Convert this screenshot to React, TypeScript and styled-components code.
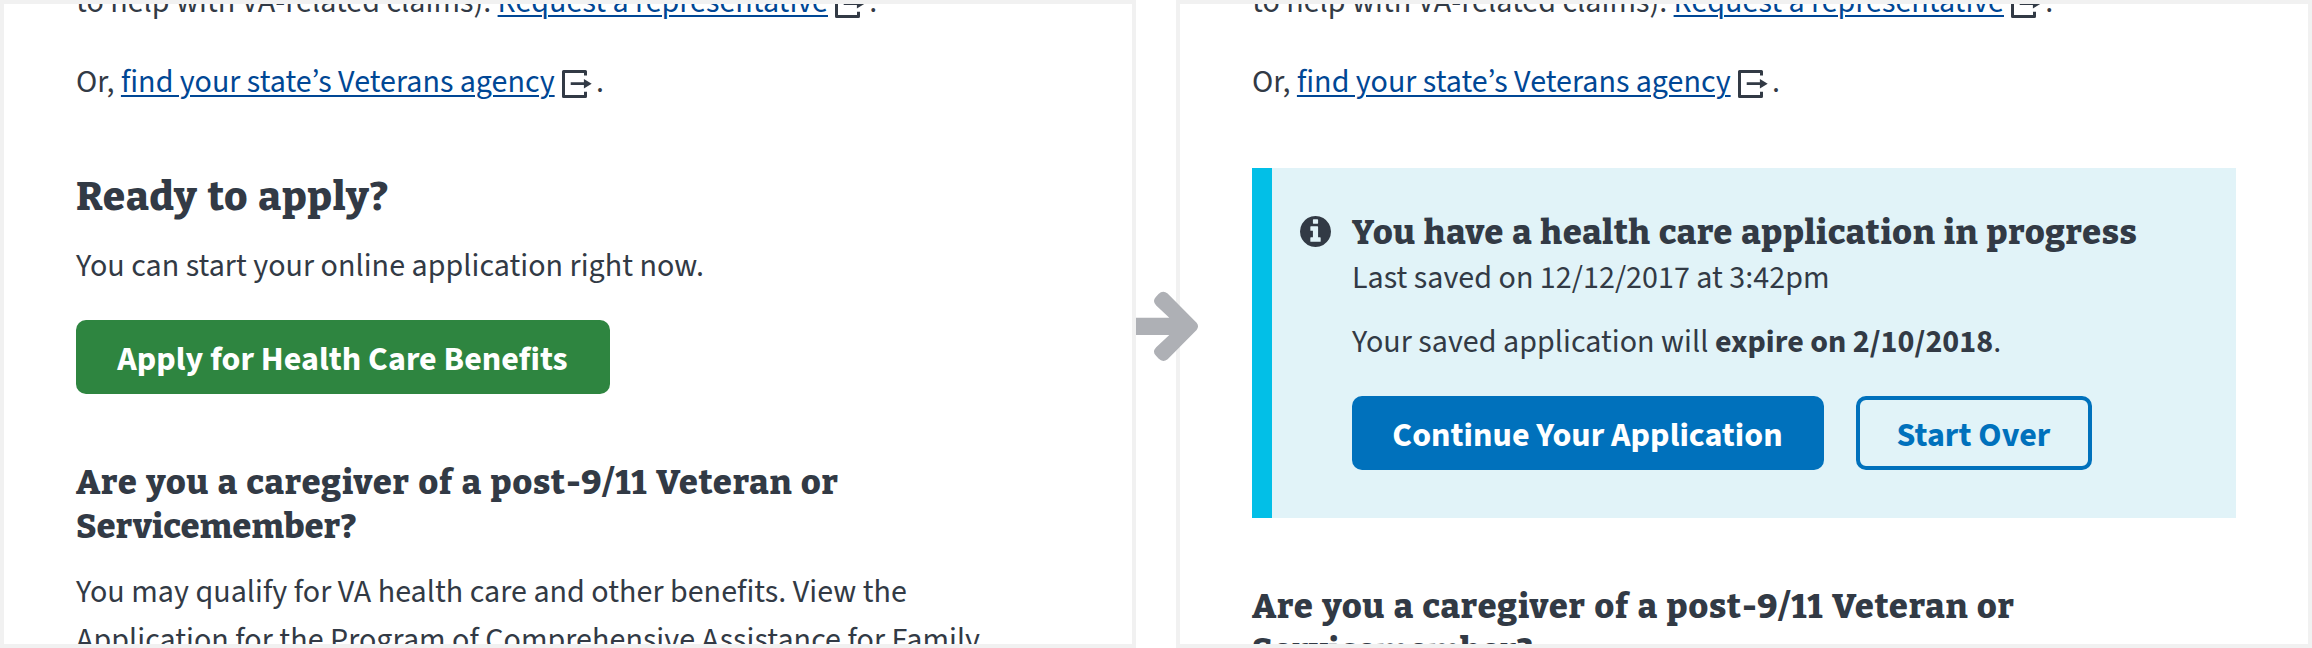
import React from 'react';
import styled, { createGlobalStyle } from 'styled-components';

const GlobalStyle = createGlobalStyle`
  body { margin: 0; background: #fff; }
  *, *::before, *::after { box-sizing: border-box; }
`;

const Comparison = styled.main`
  display: flex;
  gap: 40px;
  position: relative;
  width: 2312px;
  height: 648px;
  overflow: hidden;
  color: #323a45;
  font-family: 'Source Sans 3', 'Source Sans Pro', 'Noto Sans CJK SC', sans-serif;
  font-size: 32px;
  line-height: 48px;
`;

const Panel = styled.section`
  flex: 1;
  height: 648px;
  border: 4px solid #f1f1f1;
  padding: 0 72px;
  overflow: hidden;
`;

const Content = styled.div`
  margin-top: -26px;
  white-space: nowrap;
`;

const Paragraph = styled.p<{ $gap?: number; $spacing?: number }>`
  margin: 0 0 ${(p) => p.$gap ?? 0}px;
  letter-spacing: ${(p) => p.$spacing ?? 0.04}px;
`;

const Link = styled.a`
  color: #004795;
  letter-spacing: 0;
  text-decoration: underline;
  text-decoration-thickness: 2px;
  text-underline-offset: 3px;
`;

const ExitGlyph = styled.svg`
  width: 30px;
  height: 28px;
  margin: 0 4px 0 7.3px;
  vertical-align: -6px;
  overflow: visible;
`;

const Title = styled.h2`
  margin: 65px 0 19px;
  font: 800 40px/52px Bitter, 'Noto Serif', serif;
  letter-spacing: 0.85px;
  word-spacing: 2.4px;
`;

const Subtitle = styled.h3<{ $top?: number; $bottom?: number; $spacing?: number }>`
  margin: ${(p) => p.$top ?? 0}px 0 ${(p) => p.$bottom ?? 0}px;
  font: 800 34px/44px Bitter, 'Noto Serif', serif;
  letter-spacing: ${(p) => p.$spacing ?? 0.95}px;
  word-spacing: 1.8px;
`;

const TightWord = styled.span`
  letter-spacing: 0.3px;
`;

const Button = styled.button<{ $tone: 'green' | 'blue' | 'outline'; $width: number }>`
  display: block;
  width: ${(p) => p.$width}px;
  height: 74px;
  padding: 6px 1px 0 0;
  border: ${(p) => (p.$tone === 'outline' ? '4px solid #0071bc' : '0')};
  border-radius: 10px;
  background: ${(p) => ({ green: '#2e8540', blue: '#0071bc', outline: 'transparent' })[p.$tone]};
  color: ${(p) => (p.$tone === 'outline' ? '#0071bc' : '#fff')};
  font: inherit;
  font-size: 34px;
  font-weight: 700;
  line-height: 44px;
  letter-spacing: 0.04px;
`;

const Alert = styled.div`
  display: flex;
  height: 350px;
  margin-top: 62px;
  padding: 43px 0 48px 28px;
  border-left: 20px solid #02bfe7;
  background: #e1f3f8;
`;

const AlertBody = styled.div`
  margin-left: 21px;
`;

const InfoGlyph = styled.svg`
  flex: none;
  width: 31px;
  height: 31px;
  margin-top: 5px;
`;

const Actions = styled.div`
  display: flex;
  gap: 32px;
  margin-top: 30px;
`;

const Arrow = styled.svg`
  position: absolute;
  left: 1136px;
  top: 291px;
  width: 63px;
  height: 71px;
`;

const ExitIcon = () => (
  <ExitGlyph viewBox="0 0 30 28">
    <path d="M23.5 5.6V1.5H1.5v25h22v-4.7" fill="none" stroke="currentColor" strokeWidth="3" strokeLinejoin="round" />
    <path d="M8.7 12.3h13.2V9l7.8 4.7-7.8 4.7v-3.3H8.7z" fill="currentColor" />
  </ExitGlyph>
);

const InfoIcon = () => (
  <InfoGlyph viewBox="128 128 1536 1536">
    <path
      fill="currentColor"
      d="M1152 1376v-160q0-14-9-23t-23-9h-96v-512q0-14-9-23t-23-9h-320q-14 0-23 9t-9 23v160q0 14 9 23t23 9h96v320h-96q-14 0-23 9t-9 23v160q0 14 9 23t23 9h448q14 0 23-9t9-23zm-128-896v-160q0-14-9-23t-23-9h-192q-14 0-23 9t-9 23v160q0 14 9 23t23 9h192q14 0 23-9t9-23zm640 416q0 209-103 385.5t-279.5 279.5-385.5 103-385.5-103-279.5-279.5-103-385.5 103-385.5 279.5-279.5 385.5-103 385.5 103 279.5 279.5 103 385.5z"
    />
  </InfoGlyph>
);

const Intro = () => (
  <>
    <Paragraph $gap={32}>
      to help with VA-related claims). <Link>Request a representative</Link>
      <ExitIcon />.
    </Paragraph>
    <Paragraph $spacing={0}>
      Or, <Link>find your state’s Veterans agency</Link>
      <ExitIcon />.
    </Paragraph>
  </>
);

const CaregiverHeading = ({ bottom = 0 }: { bottom?: number }) => (
  <Subtitle $top={67} $bottom={bottom}>
    Are you a caregiver of a post-9/11 Veteran or
    <br />
    <TightWord>Servicemember?</TightWord>
  </Subtitle>
);

export default function App() {
  return (
    <Comparison>
      <GlobalStyle />
      <Panel>
        <Content>
          <Intro />
          <Title>Ready to apply?</Title>
          <Paragraph $gap={30}>You can start your online application right now.</Paragraph>
          <Button $tone="green" $width={534}>
            Apply for Health Care Benefits
          </Button>
          <CaregiverHeading bottom={19} />
          <Paragraph>
            You may qualify for VA health care and other benefits. View the
            <br />
            Application for the Program of Comprehensive Assistance for Family
          </Paragraph>
        </Content>
      </Panel>
      <Panel>
        <Content>
          <Intro />
          <Alert>
            <InfoIcon />
            <AlertBody>
              <Subtitle $bottom={-1} $spacing={0.7}>
                You have a health care application in progress
              </Subtitle>
              <Paragraph $gap={16}>Last saved on 12/12/2017 at 3:42pm</Paragraph>
              <Paragraph>
                Your saved application will <strong>expire on 2/10/2018</strong>.
              </Paragraph>
              <Actions>
                <Button $tone="blue" $width={472}>
                  Continue Your Application
                </Button>
                <Button $tone="outline" $width={236}>
                  Start Over
                </Button>
              </Actions>
            </AlertBody>
          </Alert>
          <CaregiverHeading />
        </Content>
      </Panel>
      <Arrow viewBox="0 0 63 71">
        <path
          fill="#aeb0b5"
          d="M0 26.7h33.3L20.2 14.4Q16 10 19.8 6l2.7-3Q26.9-1.3 31.6 2.5l29 29.2Q63.5 35.2 60.6 39L31.6 68.2Q27 72 22.5 67.6l-2.7-3Q16 60.6 20.2 56.2L33.3 44H0z"
        />
      </Arrow>
    </Comparison>
  );
}
